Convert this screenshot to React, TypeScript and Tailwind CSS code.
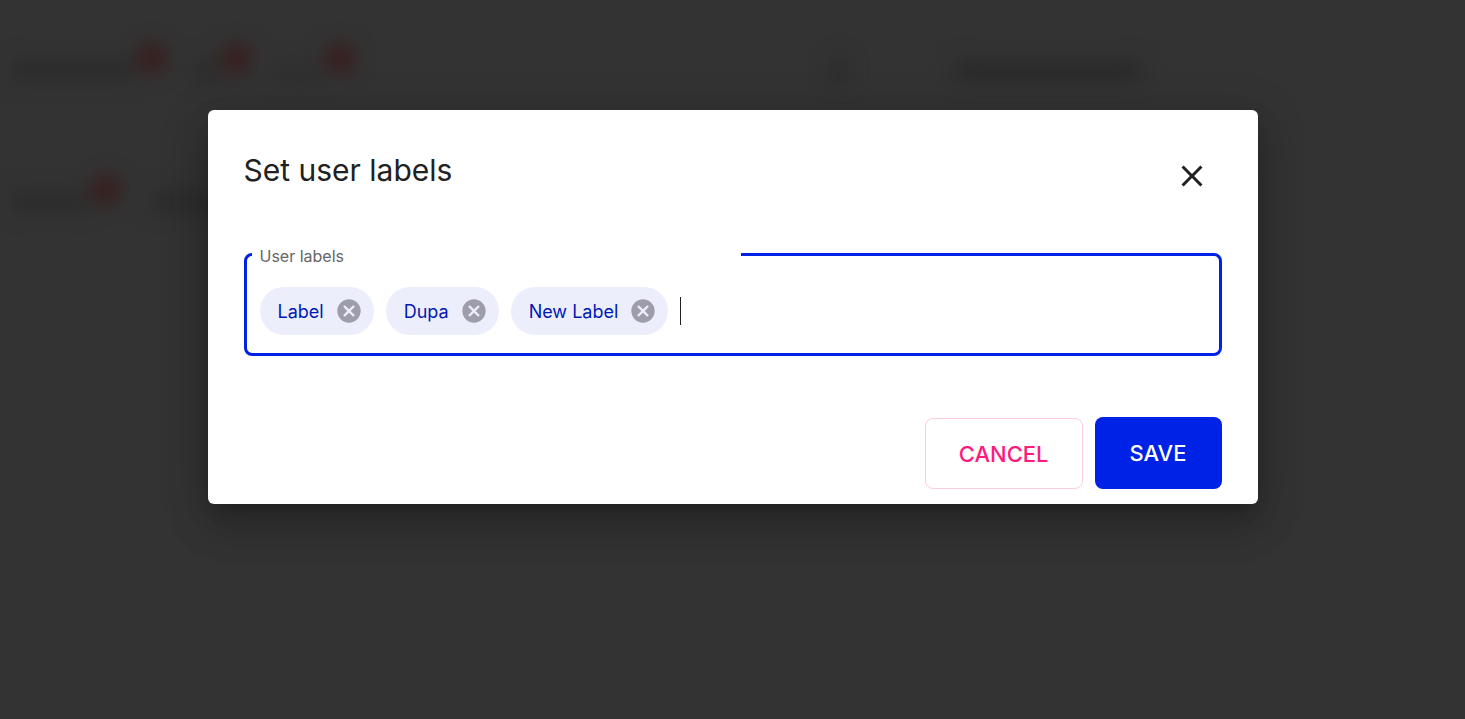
import { useState } from 'react'

interface ChipProps {
  label: string
  onDelete: () => void
}

function Chip({ label, onDelete }: ChipProps) {
  return (
    <span className="flex h-12 items-center gap-[11px] rounded-full bg-[#eceefc] pr-[11px] pl-[18px] text-[18px] text-[#0119b4]">
      {label}
      <button type="button" aria-label={`Remove ${label}`} onClick={onDelete} className="text-[#9d9ea9]">
        <svg viewBox="0 0 24 24" fill="currentColor" className="size-7">
          <path d="M12 2C6.47 2 2 6.47 2 12s4.47 10 10 10 10-4.47 10-10S17.53 2 12 2zm5 13.59L15.59 17 12 13.41 8.41 17 7 15.59 10.59 12 7 8.41 8.41 7 12 10.59 15.59 7 17 8.41 13.41 12 17 15.59z" />
        </svg>
      </button>
    </span>
  )
}

function Dot() {
  return <span className="mb-6 size-7 rounded-full bg-[#391a1a]" />
}

function PageBehind() {
  return (
    <div aria-hidden="true" className="absolute inset-0 overflow-hidden">
      <div className="pt-[46px] pl-3 blur-[10px]">
        <div className="flex h-12 items-center">
          <span className="mr-1 h-5 w-[122px] bg-[#2b2b2b]" />
          <Dot />
          <span className="mr-1 ml-7 h-5 w-6 bg-[#2b2b2b]" />
          <Dot />
          <span className="mr-1 ml-6 h-4 w-12 bg-[#2e2e2e]" />
          <Dot />
          <span className="ml-[476px] h-6 w-4 bg-[#2a2a2a]" />
          <span className="ml-[110px] h-5 w-[184px] bg-[#292929]" />
        </div>
        <div className="mt-[84px] flex h-12 items-center">
          <span className="mr-1 h-5 w-[76px] bg-[#2b2b2b]" />
          <Dot />
          <span className="ml-8 h-5 w-[90px] bg-[#2b2b2b]" />
        </div>
      </div>
    </div>
  )
}

export default function App() {
  const [labels, setLabels] = useState(['Label', 'Dupa', 'New Label'])
  const [value, setValue] = useState('')

  return (
    <div className="relative min-h-screen bg-[#333333] pt-[110px] font-['Inter',sans-serif]">
      <PageBehind />
      <div
        role="dialog"
        aria-labelledby="dialog-title"
        className="relative mx-auto max-w-[1050px] rounded-md bg-white px-9 pt-9 pb-[15px] shadow-[0_11px_15px_-7px_rgba(0,0,0,0.2),0_24px_38px_3px_rgba(0,0,0,0.14),0_9px_46px_8px_rgba(0,0,0,0.12)]"
      >
        <header className="flex items-start justify-between">
          <h2 id="dialog-title" className="text-[30px] leading-12 text-[#212121]">
            Set user labels
          </h2>
          <button type="button" aria-label="Close" className="p-3 text-[#212121]">
            <svg viewBox="0 0 24 24" fill="currentColor" className="size-9">
              <path d="M19 6.41 17.59 5 12 10.59 6.41 5 5 6.41 10.59 12 5 17.59 6.41 19 12 13.41 17.59 19 19 17.59 13.41 12z" />
            </svg>
          </button>
        </header>

        <fieldset className="mt-9 rounded-lg border-3 border-[#0022e6] px-[5px] pb-[18px]">
          <legend className="w-[calc(50%+8px)] pt-1 pl-2 text-[16px] leading-5 text-[#666666]">
            <label htmlFor="user-labels">User labels</label>
          </legend>
          <div className="flex flex-wrap items-center gap-3 px-2 pt-[21px]">
            {labels.map((label) => (
              <Chip key={label} label={label} onDelete={() => setLabels(labels.filter((l) => l !== label))} />
            ))}
            <div className="flex h-7 flex-1 items-center">
              {value === '' && <span className="h-7 w-px bg-[#212121]" />}
              <input
                id="user-labels"
                value={value}
                onChange={(e) => setValue(e.target.value)}
                className="w-full min-w-0 text-2xl text-[#212121] outline-none"
              />
            </div>
          </div>
        </fieldset>

        <footer className="mt-[61px] flex items-end justify-end gap-3 text-[22px] font-medium">
          <button type="button" className="h-[71px] rounded-lg border border-[#ffcbe0] px-[33px] pt-px text-[#ff1a7d]">
            CANCEL
          </button>
          <button type="button" className="h-[72px] rounded-lg bg-[#0022e6] px-[35px] pt-px text-white">
            SAVE
          </button>
        </footer>
      </div>
    </div>
  )
}
